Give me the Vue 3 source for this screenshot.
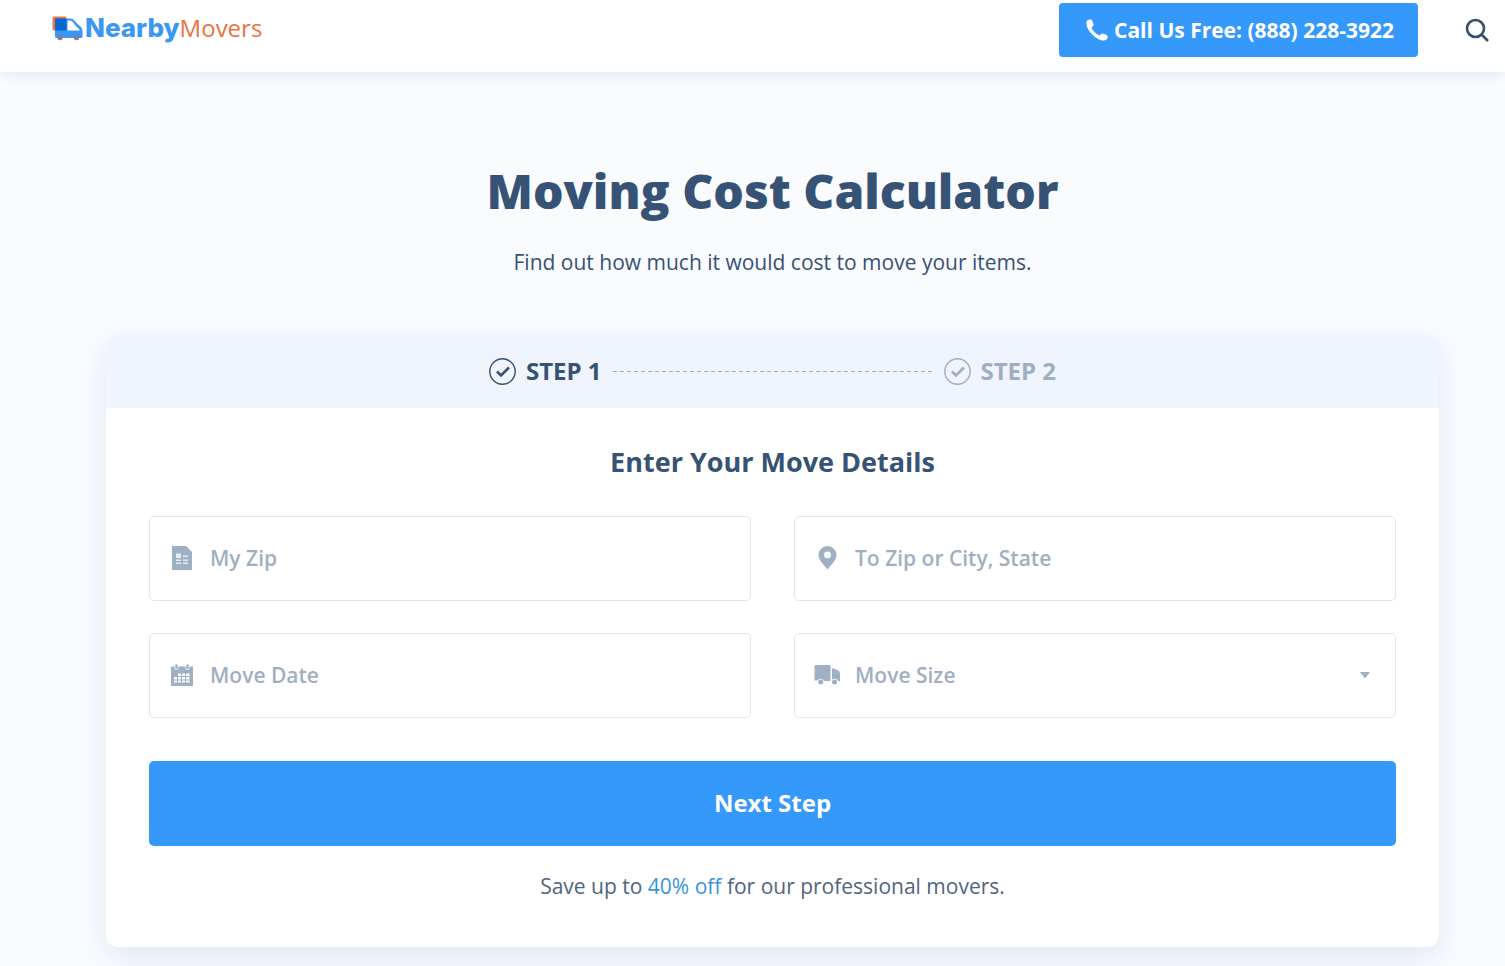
<template>
  <div class="page">
    <header class="header">
      <a class="logo" href="#" aria-label="NearbyMovers">
        <svg class="logo-truck" width="33" height="26" viewBox="0 0 33 26">
          <rect x="0.500" y="0.500" width="14" height="14" rx="1.500" fill="#ee7440" />
          <path d="M4 2.500H17.500C21 2.500 23 4.500 25 7.500L29 11Q30.500 12.500 30.500 15V20.500Q30.500 22 29 22H4.500Q3 22 3 20.500V3.500Q3 2.500 4 2.500Z" fill="#3b97f4" />
          <path d="M15.500 4.500H17C20 4.500 21.500 6.500 23 9L27.500 13.500V14.500H15.500Z" fill="#fff" />
          <path d="M3 2.500H14.500V14.500H4.500Q3 14.500 3 13Z" fill="#0767cf" />
          <circle cx="8" cy="21.500" r="2.700" fill="#7a7f9c" />
          <circle cx="24.500" cy="21.500" r="2.700" fill="#7a7f9c" />
        </svg>
        <span class="logo-nearby">Nearby</span><span class="logo-movers">Movers</span>
      </a>
      <div class="header-actions">
        <a class="call-btn" href="tel:8882283922">
          <svg width="22" height="22" viewBox="0 0 22 22">
            <path d="M1.200 1.600C2.400.500 4.400.100 5.400.700C6.500 1.700 7.500 4.600 7.600 6C7.500 7.200 5.600 7.600 5.600 8.700C6.400 11.300 10.400 15.300 13.200 16.300C14.400 16.400 14.800 14.500 16.100 14.400C17.600 14.500 20.500 15.700 21.400 16.700C22 17.700 21.500 19.500 20.400 20.600C18.600 22.100 15.500 21.900 12.200 20.100C7.800 17.700 3.600 13.300 1.500 8.900C.200 6 .100 3 1.200 1.600Z" fill="#fff" />
          </svg>
          <span>Call Us Free: (888) 228-3922</span>
        </a>
        <button class="search-btn" type="button" aria-label="Search">
          <svg width="24" height="24" viewBox="0 0 24 24" fill="none" stroke="#34506e" stroke-width="2.600">
            <circle cx="10.500" cy="10.500" r="8.500" />
            <path d="M16.500 16.500L23 23" />
          </svg>
        </button>
      </div>
    </header>

    <main class="main">
      <h1 class="title">Moving Cost Calculator</h1>
      <p class="subtitle">Find out how much it would cost to move your items.</p>

      <form class="card" @submit.prevent="nextStep">
        <div class="steps">
          <template v-for="item in steps" :key="item.id">
            <span v-if="item.id > 1" class="step-line"></span>
            <div class="step" :class="{ active: item.id === step }">
              <svg width="27" height="27" viewBox="0 0 27 27" fill="none" stroke="currentColor">
                <circle cx="13.500" cy="13.500" r="12.700" stroke-width="1.400" />
                <path d="M8 13.500L12 17.500L20 9.500" stroke-width="2.600" />
              </svg>
              <span class="step-label">{{ item.label }}</span>
            </div>
          </template>
        </div>

        <div class="card-body">
          <h2 class="card-title">Enter Your Move Details</h2>
          <div class="fields">
            <label class="field">
              <svg class="field-icon" width="26" height="26" viewBox="0 0 26 26">
                <path d="M3 1H17L23 7V25H3Z" fill="currentColor" />
                <path d="M7 8.500H12V13H7ZM7 14.500H12V16H7ZM7 17.500H12V19H7ZM14 10.500H19V12H14ZM14 14.500H19V16H14ZM14 17.500H19V19H14Z" fill="#e3ebf3" />
              </svg>
              <input v-model="form.fromZip" type="text" placeholder="My Zip" aria-label="My Zip" />
            </label>
            <label class="field">
              <svg class="field-icon" width="26" height="26" viewBox="0 0 26 26">
                <path fill-rule="evenodd" d="M13.500 1A9 9 0 0 1 22.500 10C22.500 15.500 16.500 20.500 13.500 24.500C10.500 20.500 4.500 15.500 4.500 10A9 9 0 0 1 13.500 1ZM13.500 6.500A3.400 3.400 0 1 0 13.500 13.300A3.400 3.400 0 1 0 13.500 6.500Z" fill="currentColor" />
              </svg>
              <input v-model="form.toZip" type="text" placeholder="To Zip or City, State" aria-label="To Zip or City, State" />
            </label>
            <label class="field">
              <svg class="field-icon" width="26" height="26" viewBox="0 0 26 26">
                <path d="M2 4.500H24V24H2Z" fill="currentColor" />
                <path d="M7.500 4V6M18.500 4V6" stroke="#fff" stroke-width="4" stroke-linecap="round" />
                <path d="M7.500 3.500V6M18.500 3.500V6" stroke="currentColor" stroke-width="2.400" stroke-linecap="round" />
                <path d="M9 11.500H12V14H9ZM13 11.500H16V14H13ZM17 11.500H20.500V14H17ZM5 15H8V17.500H5ZM9 15H12V17.500H9ZM13 15H16V17.500H13ZM17 15H20.500V17.500H17ZM5 18.500H8V20.500H5ZM9 18.500H12V20.500H9ZM13 18.500H16V20.500H13ZM17 18.500H20.500V20.500H17Z" fill="#fff" />
              </svg>
              <input v-model="form.date" type="text" placeholder="Move Date" aria-label="Move Date" />
            </label>
            <label class="field">
              <svg class="field-icon" width="26" height="26" viewBox="0 0 26 26">
                <path d="M1.500 3H15.500Q16.500 3 16.500 4V19H10.200A4 4 0 0 0 3.200 18.500H.500V4Q.500 3 1.500 3Z" fill="currentColor" />
                <path d="M18 6L24.500 8.500Q26 9.500 26 12V19H24A4 4 0 0 0 18 17.500Z" fill="currentColor" />
                <circle cx="6.700" cy="20" r="2.500" fill="currentColor" />
                <circle cx="20.500" cy="20" r="2.500" fill="currentColor" />
              </svg>
              <select v-model="form.size" aria-label="Move Size">
                <option value="">Move Size</option>
                <option v-for="size in sizes" :key="size" :value="size">{{ size }}</option>
              </select>
              <svg class="caret" width="12" height="8" viewBox="0 0 12 8">
                <path d="M1 1H11L6 7.500Z" fill="currentColor" />
              </svg>
            </label>
          </div>
          <button class="next-btn" type="submit">Next Step</button>
          <p class="note">Save up to <a href="#">40% off</a> for our professional movers.</p>
        </div>
      </form>
    </main>
  </div>
</template>

<script setup>
import { ref, reactive } from 'vue'

const step = ref(1)
const steps = [
  { id: 1, label: 'STEP 1' },
  { id: 2, label: 'STEP 2' }
]

const sizes = ['Studio', '1 Bedroom', '2 Bedrooms', '3 Bedrooms', '4+ Bedrooms']

const form = reactive({
  fromZip: '',
  toZip: '',
  date: '',
  size: ''
})

const nextStep = () => {
  step.value = 2
}
</script>

<style>
body {
  margin: 0;
  background-color: #f9fbff;
}
</style>

<style scoped>
.page {
  font-family: "Open Sans", "Noto Sans", sans-serif;
  color: #365274;
}

.page * {
  box-sizing: border-box;
}

a {
  text-decoration: none;
}

/* header */
.header {
  display: flex;
  align-items: flex-start;
  justify-content: space-between;
  height: 72px;
  padding: 3px 16px 0 52px;
  background-color: #fff;
  box-shadow: 0 2px 14px rgba(52, 80, 110, 0.12);
}

.logo {
  display: flex;
  align-items: baseline;
  padding-top: 7px;
  line-height: 36px;
}

.logo-truck {
  align-self: flex-start;
  margin-top: 6px;
}

.logo-nearby {
  font-family: Inter, sans-serif;
  font-size: 26px;
  font-weight: 800;
  color: #3b97f4;
}

.logo-movers {
  font-size: 24px;
  color: #e9733f;
}

.header-actions {
  display: flex;
  align-items: center;
  gap: 47px;
}

.call-btn {
  display: flex;
  align-items: center;
  gap: 6px;
  height: 54px;
  padding: 0 24px 0 27px;
  border-radius: 4px;
  background-color: #3598fb;
  color: #fff;
  font-size: 21px;
  font-weight: 700;
}

.search-btn {
  display: flex;
  padding: 0;
  border: none;
  background: none;
  cursor: pointer;
}

/* content */
.main {
  padding: 86px 66px 19px 106px;
  text-align: center;
}

.title {
  margin: 0;
  font-size: 48px;
  font-weight: 800;
  line-height: 66px;
}

.subtitle {
  margin: 23px 0 0;
  font-size: 21px;
  line-height: 30px;
}

.card {
  margin-top: 58px;
  border-radius: 12px;
  background-color: #fff;
  box-shadow: 0 10px 30px rgba(52, 100, 150, 0.12);
}

.steps {
  display: flex;
  align-items: center;
  justify-content: center;
  gap: 11px;
  height: 73px;
  border-radius: 12px 12px 0 0;
  background-color: #f0f4fc;
}

.step {
  display: flex;
  align-items: center;
  gap: 10px;
  font-size: 24px;
  font-weight: 700;
  line-height: 32px;
  color: #9fafc3;
}

.step.active {
  color: #365274;
}

.step-label {
  padding-bottom: 2px;
}

.step-line {
  width: 320px;
  height: 1px;
  background: repeating-linear-gradient(to right, #9fafc3 0 4px, transparent 4px 7px);
}

.card-body {
  padding: 36px 43px 46px;
}

.card-title {
  margin: 0;
  font-size: 27px;
  font-weight: 700;
  line-height: 36px;
}

.fields {
  display: grid;
  grid-template-columns: 1fr 1fr;
  gap: 32px 43px;
  margin-top: 36px;
}

.field {
  display: flex;
  align-items: center;
  gap: 15px;
  height: 85px;
  padding: 0 24px 2px 19px;
  border: 1px solid #e0e6ef;
  border-radius: 5px;
  color: #9fb0c5;
}

.field-icon {
  flex: none;
}

.field input,
.field select {
  flex: 1;
  min-width: 0;
  height: 100%;
  padding: 0;
  border: none;
  outline: none;
  appearance: none;
  background: none;
  font-family: inherit;
  font-size: 21px;
  font-weight: 600;
  color: #9fafc1;
}

.field input::placeholder {
  color: #9fafc1;
  opacity: 1;
}

.next-btn {
  width: 100%;
  height: 85px;
  margin-top: 43px;
  padding: 0 0 2px;
  border: none;
  border-radius: 5px;
  background-color: #3598fb;
  color: #fff;
  font-family: inherit;
  font-size: 24px;
  font-weight: 700;
  cursor: pointer;
}

.note {
  margin: 25px 0 0;
  font-size: 21px;
  line-height: 30px;
  color: #50657f;
}

.note a {
  color: #3b93dc;
}
</style>
